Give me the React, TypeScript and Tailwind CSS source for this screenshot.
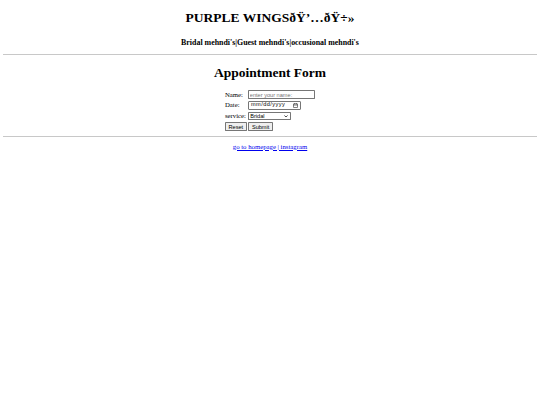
const sans = { fontFamily: '"Liberation Sans", Arial, sans-serif' };

function Field({ label, children }: { label: string; children: React.ReactNode }) {
  return (
    <tr className="h-[10.5px]">
      <td className="pr-[2px] align-middle">{label}</td>
      <td className="align-middle">{children}</td>
    </tr>
  );
}

export default function App() {
  return (
    <div
      className="min-h-[405px] bg-white px-[3.4px] pt-px text-black"
      style={{ fontFamily: '"Liberation Serif", "Times New Roman", serif' }}
    >
      <h1 className="mt-[9px] text-center text-[13.5px] font-bold leading-[16px]">PURPLE WINGSðŸ’…ðŸ÷»</h1>
      <h3 className="mt-[12px] text-center text-[7.9px] font-bold leading-[10px]">
        Bridal mehndi's|Guest mehndi's|occusional mehndi's
      </h3>
      <hr className="mt-[6px] border-t border-[#c8c8c8]" />
      <h1 className="mt-[10px] text-center text-[13.5px] font-bold leading-[16px]">Appointment Form</h1>

      <form className="mt-[8.5px] flex justify-center">
        <table className="border-collapse text-[6.75px] leading-[8px]">
          <tbody>
            <Field label="Name:">
              <input
                type="text"
                placeholder="enter your name:"
                className="block h-[21px] w-[159px] rounded-[2px] border border-[#767676] px-[2px] text-[13.33px] leading-normal placeholder:text-[#757575] [zoom:0.421875]"
                style={sans}
              />
            </Field>
            <Field label="Date:">
              <div className="flex h-[9px] w-[53px] items-center justify-between rounded-[1px] border-[0.5px] border-[#767676] pl-[2px] pr-[2px]">
                <span className="text-[5.6px] leading-none tracking-[0.45px] text-black" style={sans}>
                  mm/dd/yyyy
                </span>
                <svg viewBox="0 0 16 16" className="h-[5px] w-[5px]" fill="none" stroke="#000" strokeWidth="1.6">
                  <rect x="1.5" y="2.5" width="13" height="12" rx="1" />
                  <path d="M1.5 6.5h13M5 1v3M11 1v3" />
                </svg>
              </div>
            </Field>
            <Field label="service:">
              <div className="relative w-[43px]">
                <select
                  className="block h-[19px] w-[102px] appearance-none rounded-[2px] border border-[#767676] bg-white py-0 pl-[3px] text-[13.33px] leading-[17px] [zoom:0.421875]"
                  style={sans}
                >
                  <option>Bridal</option>
                  <option>Guest</option>
                  <option>Occasional</option>
                </select>
                <svg viewBox="0 0 10 6" className="pointer-events-none absolute right-[3px] top-[3px] h-[2.5px] w-[4px]" fill="none" stroke="#000" strokeWidth="1.8">
                  <path d="M1 1l4 4 4-4" />
                </svg>
              </div>
            </Field>
            <tr className="h-[10.5px]">
              <td colSpan={2} className="align-middle">
                <div className="flex gap-[1.7px]">
                  <button
                    type="reset"
                    className="h-[21px] rounded-[2px] border border-[#767676] bg-[#efefef] px-[6px] text-[13.33px] leading-normal [zoom:0.421875]"
                    style={sans}
                  >
                    Reset
                  </button>
                  <button
                    type="button"
                    className="h-[21px] rounded-[2px] border border-[#767676] bg-[#efefef] px-[6px] text-[13.33px] leading-normal [zoom:0.421875]"
                    style={sans}
                  >
                    Submit
                  </button>
                </div>
              </td>
            </tr>
          </tbody>
        </table>
      </form>

      <hr className="mt-[4px] border-t border-[#c8c8c8]" />
      <p className="mt-[6px] text-center text-[6.75px] leading-[8px]">
        <a href="#" className="text-[#0000ee] underline">go to homepage | instagram</a>
      </p>
    </div>
  );
}
